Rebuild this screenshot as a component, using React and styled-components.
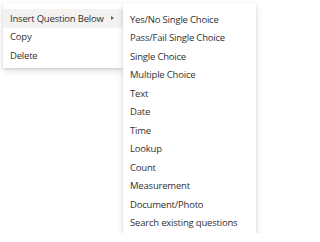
import styled, { createGlobalStyle } from "styled-components";

const GlobalStyle = createGlobalStyle`
  html, body {
    margin: 0;
    padding: 0;
    background: #ffffff;
  }
  body {
    font-family: "Open Sans", "Noto Sans", sans-serif;
    color: #323130;
  }
`;

const submenuItems = [
  "Yes/No Single Choice",
  "Pass/Fail Single Choice",
  "Single Choice",
  "Multiple Choice",
  "Text",
  "Date",
  "Time",
  "Lookup",
  "Count",
  "Measurement",
  "Document/Photo",
  "Search existing questions",
];

/// context menu with the "insert" submenu opened next to it
const App = () => {
  return (
    <>
      <GlobalStyle />
      <Stage>
        <Menu>
          <Item $active>
            <span>Insert Question Below</span>
            <Caret />
          </Item>
          <Item>Copy</Item>
          <Item>Delete</Item>
        </Menu>
        <SubMenu>
          {submenuItems.map((label) => (
            <Item key={label}>{label}</Item>
          ))}
        </SubMenu>
      </Stage>
    </>
  );
};

const Stage = styled.div`
  display: flex;
  align-items: flex-start;
  padding: 3px 0 0 3px;
`;

const Menu = styled.div`
  width: 120px;
  padding: 6px 0 3px;
  background: #ffffff;
  box-shadow: rgba(0, 0, 0, 0.13) 0px 3px 7px 0px, rgba(0, 0, 0, 0.11) 0px 1px 2px 0px;
`;

const SubMenu = styled(Menu)`
  width: 133px;
  padding: 7px 0 1px;
  position: relative;
  z-index: 1;
`;

const Item = styled.div`
  display: flex;
  align-items: center;
  justify-content: space-between;
  height: 18.5px;
  padding: 0 9px 0 7px;
  font-size: 9.5px;
  letter-spacing: -0.2px;
  white-space: nowrap;
  background: ${(p) => (p.$active ? "#f3f2f1" : "transparent")};
`;

const Caret = styled.span`
  width: 0;
  height: 0;
  border-top: 2.5px solid transparent;
  border-bottom: 2.5px solid transparent;
  border-left: 3px solid #605e5c;
`;

export default App;
